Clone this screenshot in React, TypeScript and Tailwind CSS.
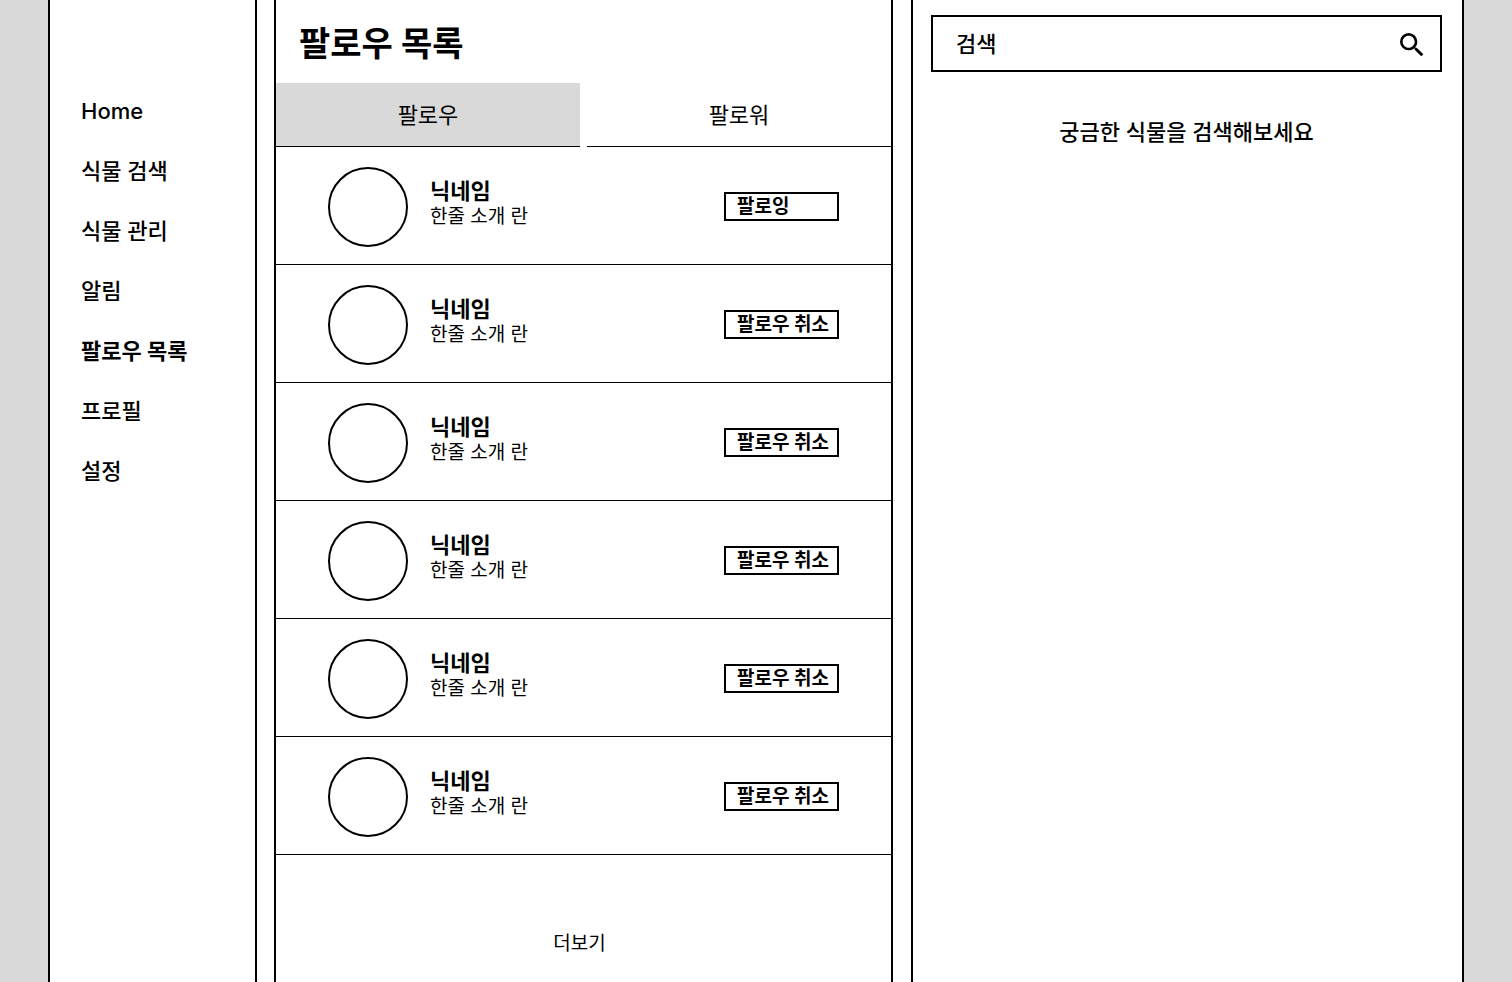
import { MdSearch } from "react-icons/md";

const navItems = ["Home", "식물 검색", "식물 관리", "알림", "팔로우 목록", "프로필", "설정"];
const currentPage = "팔로우 목록";

const follows = [
  { id: 1, name: "닉네임", intro: "한줄 소개 란", action: "팔로잉" },
  { id: 2, name: "닉네임", intro: "한줄 소개 란", action: "팔로우 취소" },
  { id: 3, name: "닉네임", intro: "한줄 소개 란", action: "팔로우 취소" },
  { id: 4, name: "닉네임", intro: "한줄 소개 란", action: "팔로우 취소" },
  { id: 5, name: "닉네임", intro: "한줄 소개 란", action: "팔로우 취소" },
  { id: 6, name: "닉네임", intro: "한줄 소개 란", action: "팔로우 취소" },
];

function Sidebar() {
  return (
    <nav className="mr-[17px] border-x-2 border-black pt-[95px] pl-[31px]">
      <ul className="flex flex-col gap-7">
        {navItems.map((item) => (
          <li key={item} className="flex">
            <a
              href="#"
              aria-current={item === currentPage ? "page" : undefined}
              className={item === currentPage ? "font-bold" : "font-medium"}
            >
              {item}
            </a>
          </li>
        ))}
      </ul>
    </nav>
  );
}

function FollowRow({ name, intro, action }: { name: string; intro: string; action: string }) {
  return (
    <li className="flex items-center border-b border-black px-[52px] pt-5 pb-[17px]">
      <div className="size-20 shrink-0 rounded-full border-2 border-black" />
      <div className="ml-[22px] flex grow flex-col pb-2">
        <span className="leading-7 font-bold">{name}</span>
        <span className="text-[19px] leading-6">{intro}</span>
      </div>
      <button
        type="button"
        className="mb-0.5 flex h-[29px] w-[115px] shrink-0 items-center border-2 border-black pl-[11px] text-[19px] leading-[25px] font-bold whitespace-nowrap"
      >
        {action}
      </button>
    </li>
  );
}

function FollowList() {
  return (
    <main className="flex min-w-0 flex-col border-x-2 border-black">
      <h1 className="px-[23px] pt-5 pb-[15px] text-[34px] leading-[48px] font-bold">팔로우 목록</h1>
      <div role="tablist" className="grid grid-cols-2 gap-[7px]">
        <button
          type="button"
          role="tab"
          aria-selected="true"
          className="h-16 border-b border-black bg-[#d9d9d9]"
        >
          팔로우
        </button>
        <button type="button" role="tab" aria-selected="false" className="h-16 border-b border-black">
          팔로워
        </button>
      </div>
      <ul>
        {follows.map((f) => (
          <FollowRow key={f.id} name={f.name} intro={f.intro} action={f.action} />
        ))}
      </ul>
      <button type="button" className="mt-[77px] mr-2 self-center text-[19px] leading-6">
        더보기
      </button>
    </main>
  );
}

function SearchPanel() {
  return (
    <aside className="ml-[18px] min-w-0 border-x-2 border-black pt-[15px] pr-5 pl-[18px]">
      <form role="search" className="flex h-[57px] items-center border-2 border-black pr-3 pl-[23px]">
        <input
          type="text"
          aria-label="검색"
          placeholder="검색"
          className="min-w-0 grow bg-transparent font-medium outline-none placeholder:text-black"
        />
        <button type="button" aria-label="검색 실행" className="pt-0.5">
          <MdSearch className="size-8" />
        </button>
      </form>
      <p className="mt-11 text-center font-medium">궁금한 식물을 검색해보세요</p>
    </aside>
  );
}

export default function App() {
  return (
    <div className="min-h-screen bg-[#d9d9d9] px-12">
      <div className="grid min-h-screen grid-cols-[226px_619fr_571fr] bg-white font-[Inter,'Noto_Sans_CJK_KR',sans-serif] text-[22px] leading-8 text-black">
        <Sidebar />
        <FollowList />
        <SearchPanel />
      </div>
    </div>
  );
}
